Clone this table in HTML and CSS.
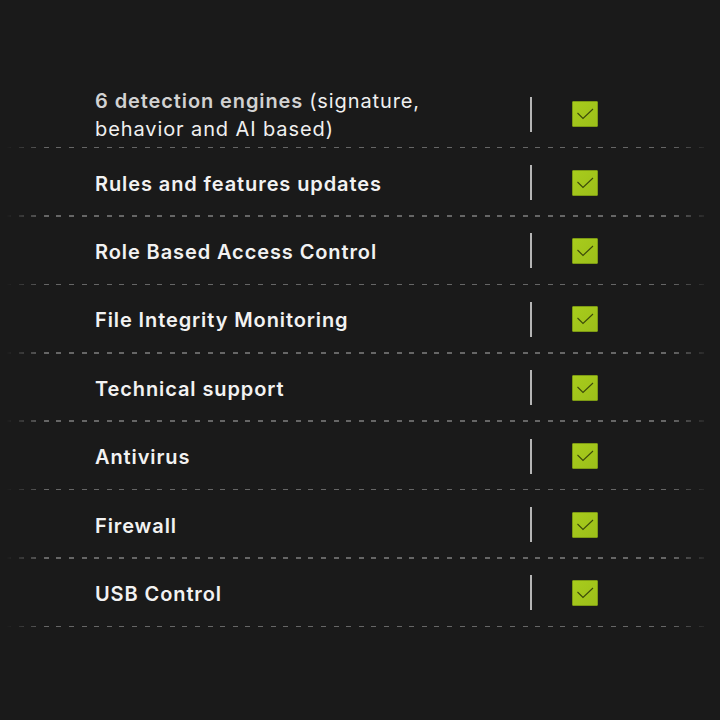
FILE: index.html
```html
<!DOCTYPE html>
<html>
<head>
<meta charset="utf-8">
<link rel="stylesheet" href="styles.css">
</head>
<body>
<ul class="list">
  <li class="row"><span class="label"><b class="dim">6 detection engines</b> <span class="light">(signature,<br>behavior and AI based)</span></span><span class="divider"></span><span class="check"><svg viewBox="0 0 24 24"><path d="M4.5 11 L10 16.5 L20 7"/></svg></span></li>
  <li class="row"><span class="label">Rules and features updates</span><span class="divider"></span><span class="check"><svg viewBox="0 0 24 24"><path d="M4.5 11 L10 16.5 L20 7"/></svg></span></li>
  <li class="row"><span class="label">Role Based Access Control</span><span class="divider"></span><span class="check"><svg viewBox="0 0 24 24"><path d="M4.5 11 L10 16.5 L20 7"/></svg></span></li>
  <li class="row"><span class="label">File Integrity Monitoring</span><span class="divider"></span><span class="check"><svg viewBox="0 0 24 24"><path d="M4.5 11 L10 16.5 L20 7"/></svg></span></li>
  <li class="row"><span class="label">Technical support</span><span class="divider"></span><span class="check"><svg viewBox="0 0 24 24"><path d="M4.5 11 L10 16.5 L20 7"/></svg></span></li>
  <li class="row"><span class="label">Antivirus</span><span class="divider"></span><span class="check"><svg viewBox="0 0 24 24"><path d="M4.5 11 L10 16.5 L20 7"/></svg></span></li>
  <li class="row"><span class="label">Firewall</span><span class="divider"></span><span class="check"><svg viewBox="0 0 24 24"><path d="M4.5 11 L10 16.5 L20 7"/></svg></span></li>
  <li class="row"><span class="label">USB Control</span><span class="divider"></span><span class="check"><svg viewBox="0 0 24 24"><path d="M4.5 11 L10 16.5 L20 7"/></svg></span></li>
</ul>
</body>
</html>
```
FILE: styles.css
```css
html, body {
  margin: 0;
  padding: 0;
  background: #1a1a1a;
  width: 720px;
  height: 720px;
  overflow: hidden;
}
.list {
  list-style: none;
  margin: 0;
  padding: 80px 0 0 0;
  font-family: Inter, "Noto Sans", sans-serif;
}
.row {
  position: relative;
  height: 68.4px;
  display: flex;
  align-items: center;
  padding-left: 95px;
  box-sizing: border-box;
}
.row::after {
  content: "";
  position: absolute;
  left: 6px;
  right: 8px;
  bottom: 0;
  height: 1.5px;
  background: repeating-linear-gradient(90deg, #666 0 5px, transparent 5px 12.6px);
  -webkit-mask-image: linear-gradient(90deg, transparent 0, #000 40px, #000 calc(100% - 40px), transparent 100%);
  mask-image: linear-gradient(90deg, transparent 0, #000 40px, #000 calc(100% - 40px), transparent 100%);
}
.label {
  width: 435px;
  color: #f2f2f2;
  font-size: 20px;
  font-weight: 600;
  line-height: 28px;
  letter-spacing: 0.9px;
  padding-top: 2px;
}
.dim {
  color: #d2d2d2;
  font-weight: 600;
}
.light {
  font-weight: 400;
  color: #f0f0f0;
}
.divider {
  width: 1.5px;
  height: 35px;
  background: #b5b5b5;
  margin-right: 40px;
}
.check {
  width: 26px;
  height: 26px;
  box-sizing: border-box;
  background: linear-gradient(135deg, #a8cc1c, #9cbf1a);
  border: 1px solid #7d9a14;
  border-radius: 1px;
  display: block;
}
.check svg {
  display: block;
  width: 24px;
  height: 24px;
}
.check path {
  fill: none;
  stroke: #3c4a0a;
  stroke-width: 1.1;
}
```
